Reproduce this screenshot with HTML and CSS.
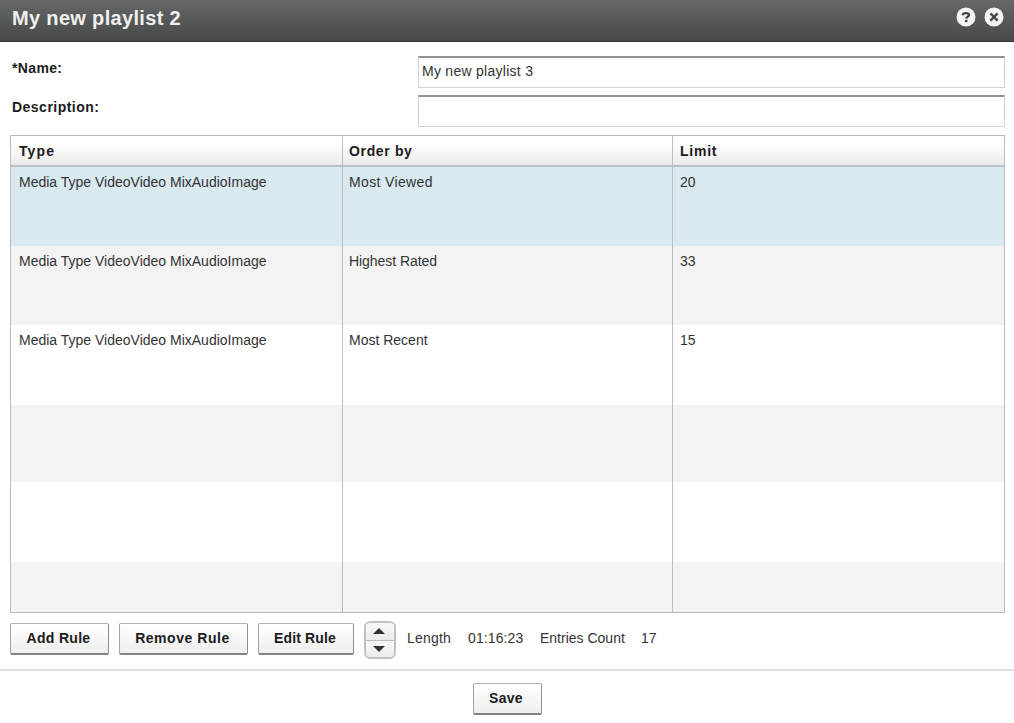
FILE: index.html
```html
<!DOCTYPE html>
<html lang="en">
<head>
<meta charset="utf-8">
<title>My new playlist 2</title>
<link rel="stylesheet" href="styles.css">
</head>
<body>
<header class="titlebar">
  <h1 class="title">My new playlist 2</h1>
  <div class="window-actions">
    <svg class="icon" viewBox="0 0 20 20"><circle cx="10" cy="10" r="9.5" fill="#f4f4f4"/><path d="M6.8 8.2V7.6C7 5.6 13 5.4 13 8c0 1.8-2.6 1.6-2.8 3.6" fill="none" stroke="#444645" stroke-width="2.3"/><rect x="8.9" y="12.8" width="2.6" height="2.3" fill="#444645"/></svg>
    <svg class="icon" viewBox="0 0 20 20"><circle cx="10" cy="10" r="9.5" fill="#f4f4f4"/><path d="M6.4 6.4l7.2 7.2M13.6 6.4l-7.2 7.2" stroke="#444645" stroke-width="2.3"/></svg>
  </div>
</header>
<main class="content">
  <div class="field"><label class="label name-label" for="name">*Name:</label><input class="input" id="name" value="My new playlist 3"></div>
  <div class="field"><label class="label desc-label" for="desc">Description:</label><input class="input" id="desc"></div>
  <div class="grid">
    <div class="row head"><div class="cell h-type">Type</div><div class="cell h-order">Order by</div><div class="cell h-limit">Limit</div></div>
    <div class="row selected"><div class="cell media">Media Type VideoVideo MixAudioImage</div><div class="cell order viewed">Most Viewed</div><div class="cell">20</div></div>
    <div class="row odd"><div class="cell media">Media Type VideoVideo MixAudioImage</div><div class="cell order rated">Highest Rated</div><div class="cell">33</div></div>
    <div class="row tall"><div class="cell media">Media Type VideoVideo MixAudioImage</div><div class="cell order">Most Recent</div><div class="cell">15</div></div>
    <div class="row odd short"><div class="cell"></div><div class="cell"></div><div class="cell"></div></div>
    <div class="row tall"><div class="cell"></div><div class="cell"></div><div class="cell"></div></div>
    <div class="row odd last"><div class="cell"></div><div class="cell"></div><div class="cell"></div></div>
  </div>
  <div class="toolbar">
    <button class="btn add">Add Rule</button>
    <button class="btn remove">Remove Rule</button>
    <button class="btn edit">Edit Rule</button>
    <div class="stepper">
      <button class="step" aria-label="Move up"><svg class="arrow" viewBox="0 0 12 6"><path d="M0 6L6 0l6 6z" fill="#333"/></svg></button>
      <button class="step" aria-label="Move down"><svg class="arrow" viewBox="0 0 12 6"><path d="M0 0h12L6 6z" fill="#333"/></svg></button>
    </div>
    <div class="stats"><span class="s-length">Length</span><span class="s-time">01:16:23</span><span class="s-entries">Entries Count</span><span class="s-count">17</span></div>
  </div>
</main>
<footer class="footer"><button class="btn save">Save</button></footer>
</body>
</html>
```
FILE: styles.css
```css
* { box-sizing: border-box; }
body { margin: 0; width: 1014px; height: 723px; overflow: hidden; background: #fff; color: #333; font: 14px/20px "Liberation Sans", Arial, sans-serif; }
.titlebar { height: 42px; display: flex; justify-content: space-between; padding: 7px 10px 0 12px; background: linear-gradient(#666867, #474948); border-bottom: 1px solid #343635; }
.title { margin: 0; font-size: 20px; line-height: 22px; color: #f0f0f0; letter-spacing: 0.33px; }
.window-actions { display: flex; gap: 8px; }
.icon { width: 20px; height: 20px; }
.content { padding: 14px 9px 0 10px; }
.field { display: flex; justify-content: space-between; height: 32px; margin-bottom: 7px; padding-left: 2px; }
.label { font-weight: bold; color: #1c1c1c; padding-top: 2px; }
.name-label { letter-spacing: 0.35px; }
.desc-label { letter-spacing: 0.48px; }
.input { width: 587px; height: 32px; border: 1px solid #d0d2d3; border-top: 2px solid #929292; padding: 0 4px 3px 3px; font: inherit; letter-spacing: 0.27px; color: #333; outline: 0; border-radius: 0; }
.grid { margin-top: 8px; width: 995px; height: 478px; border: 1px solid #b8bcbe; }
.row { display: grid; grid-template-columns: 332px 330px 1fr; height: 79px; }
.cell { padding: 5px 7px; border-right: 1px solid #bbbec0; white-space: nowrap; }
.cell:last-child { border-right: 0; }
.media { padding-left: 8px; }
.order { padding-left: 6px; }
.viewed { letter-spacing: 0.36px; }
.rated { letter-spacing: -0.06px; }
.head { height: 31px; background: linear-gradient(#fff 25%, #ebebeb); border-bottom: 2px solid #bcc0c2; font-weight: bold; color: #1c1c1c; }
.head .cell { padding: 5px 0 0 8px; }
.head .h-type { letter-spacing: 1.1px; }
.head .h-order { padding-left: 6px; letter-spacing: 0.65px; }
.head .h-limit { padding-left: 7px; letter-spacing: 0.75px; }
.selected { background: #d8e9f0; }
.odd { background: #f3f3f3; }
.tall { height: 80px; }
.short { height: 77px; }
.last { height: 50px; }
.toolbar { display: flex; align-items: flex-start; margin-top: 8px; height: 48px; }
.btn { height: 32px; margin: 2px 10px 0 0; padding: 0 2px 2px 0; border: 1px solid #a0a3a3; border-color: #afb1b1 #8f9191 #818383 #a2a4a4; border-width: 1px 1px 2px 1px; border-radius: 2px; background: linear-gradient(#fff, #eee); font: bold 14px/20px "Liberation Sans", Arial, sans-serif; color: #1c1c1c; white-space: nowrap; }
.add { width: 99px; letter-spacing: 0.3px; }
.remove { width: 129px; letter-spacing: 0.55px; }
.edit { width: 96px; letter-spacing: 0.15px; }
.stepper { width: 32px; height: 38px; border: 2px solid #bfc3c4; border-radius: 6px; overflow: hidden; }
.step { display: flex; align-items: center; justify-content: center; width: 100%; height: 17px; border: 0; padding: 0 2px 2px 0; background: linear-gradient(#f8f8f8, #ececec); }
.step + .step { border-top: 1px solid #b9bdbe; padding-bottom: 0; }
.arrow { width: 12px; height: 6px; }
.stats { display: flex; padding: 7px 0 0 11px; white-space: nowrap; }
.s-length { width: 61px; letter-spacing: 0.2px; }
.s-time { width: 72px; letter-spacing: 0.1px; }
.s-entries { width: 101px; }
.footer { border-top: 2px solid #dcdfdf; display: flex; justify-content: center; padding-top: 12px; }
.save { width: 69px; margin: 0; letter-spacing: 0.3px; }
```
